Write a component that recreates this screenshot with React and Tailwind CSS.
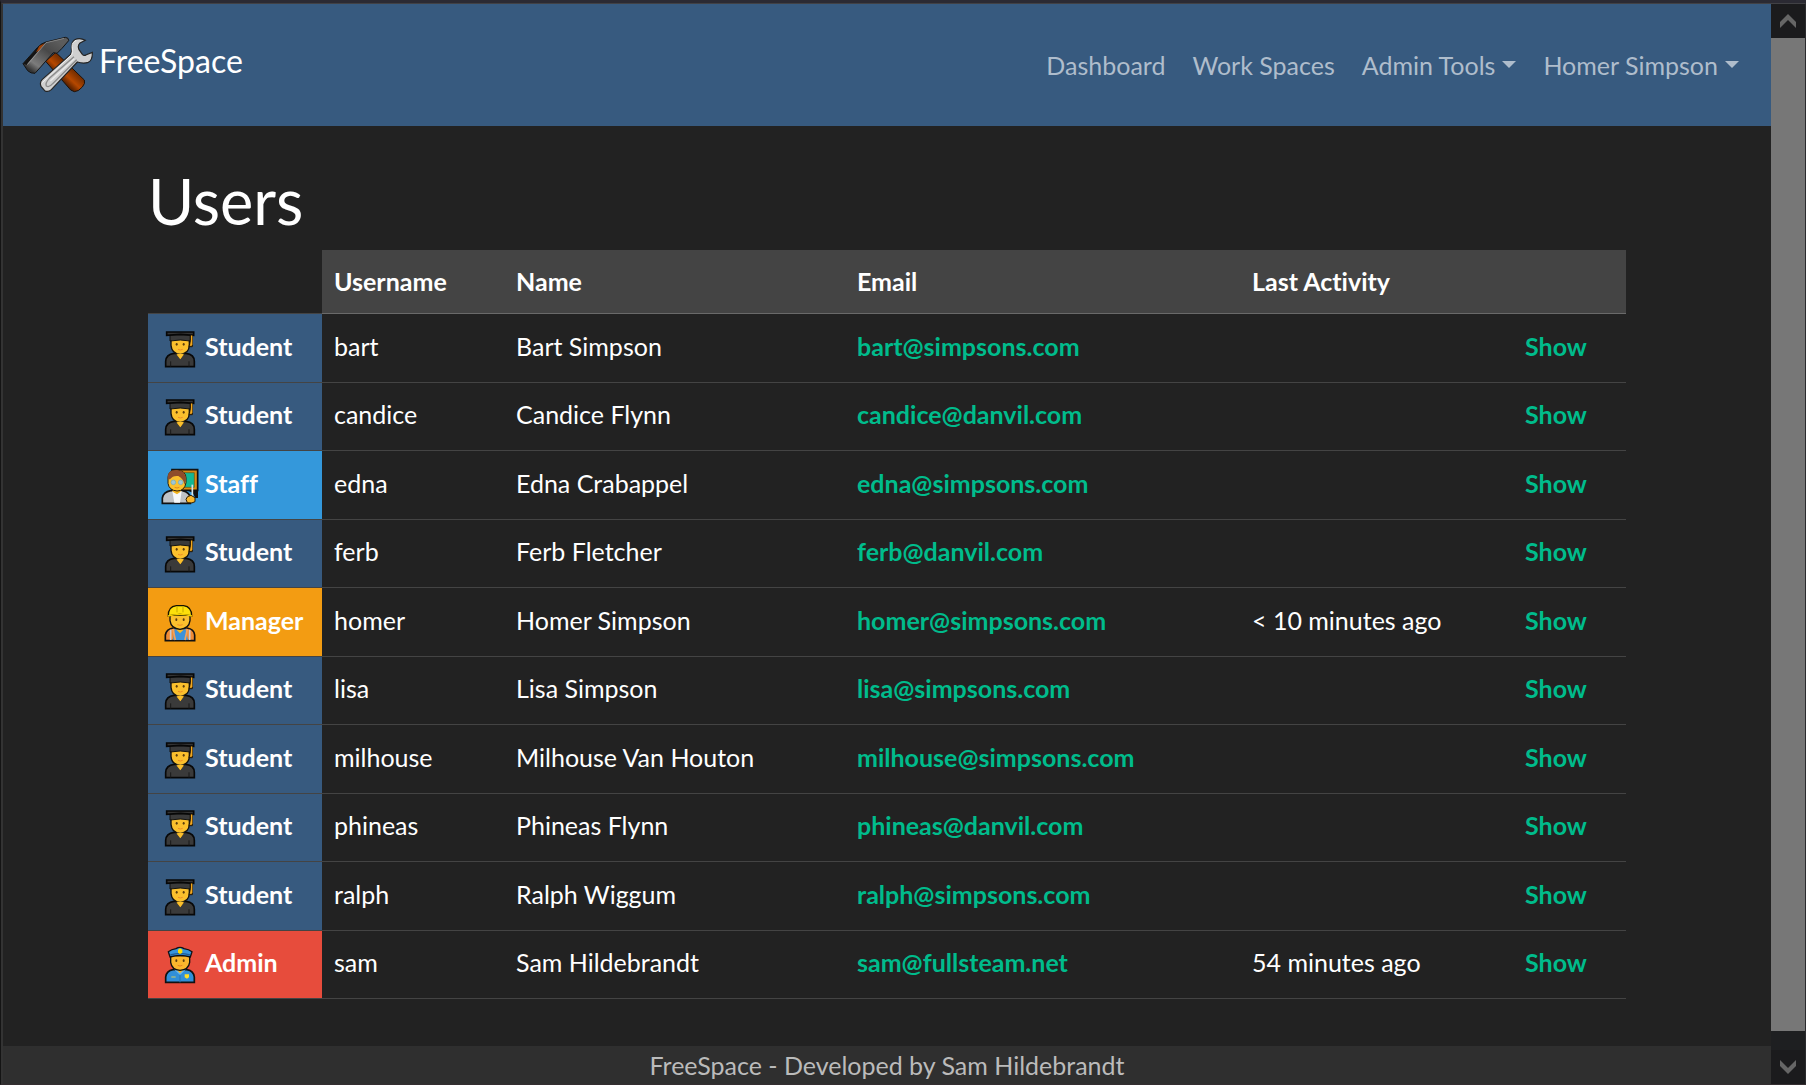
const users = [
  ['student', 'bart', 'Bart Simpson', 'bart@simpsons.com', ''],
  ['student', 'candice', 'Candice Flynn', 'candice@danvil.com', ''],
  ['staff', 'edna', 'Edna Crabappel', 'edna@simpsons.com', ''],
  ['student', 'ferb', 'Ferb Fletcher', 'ferb@danvil.com', ''],
  ['manager', 'homer', 'Homer Simpson', 'homer@simpsons.com', '< 10 minutes ago'],
  ['student', 'lisa', 'Lisa Simpson', 'lisa@simpsons.com', ''],
  ['student', 'milhouse', 'Milhouse Van Houton', 'milhouse@simpsons.com', ''],
  ['student', 'phineas', 'Phineas Flynn', 'phineas@danvil.com', ''],
  ['student', 'ralph', 'Ralph Wiggum', 'ralph@simpsons.com', ''],
  ['admin', 'sam', 'Sam Hildebrandt', 'sam@fullsteam.net', '54 minutes ago'],
];

function StudentIcon() {
  return (
    <svg width="40" height="44" viewBox="60 258 120 132" aria-hidden="true" className="shrink-0">
      <path d="M77 380V364Q78 343 102 340H138Q163 343 163 364V380Z" fill="#3a3a3a" stroke="#080808" strokeWidth="5" />
      <path d="M92 364V380M147 364V380" stroke="#191919" strokeWidth="3" />
      <path d="M110 336H131V344L121 358L110 344Z" fill="#f2b21c" />
      <path d="M93 296H148V316Q147 341 121 343Q95 341 93 316Z" fill="#fbc02d" stroke="#111" strokeWidth="4" />
      <path d="M110 341H131L121 357Z" fill="#fbc02d" />
      <ellipse cx="110" cy="313" rx="3" ry="4" fill="#5d3d0c" />
      <ellipse cx="131" cy="313" rx="3" ry="4" fill="#5d3d0c" />
      <path d="M114 328Q121 332 128 328" fill="none" stroke="#ef8d27" strokeWidth="3" />
      <path d="M90 284H151V303Q121 297 90 303Z" fill="#3a3a3a" stroke="#111" strokeWidth="3" />
      <path d="M80 276H161V286L121 283L80 286Z" fill="#333" stroke="#070707" strokeWidth="5" />
      <path d="M157 285V320H147L151 302V288" fill="#d8941b" stroke="#1a1204" strokeWidth="3" />
      <path d="M155 287V315" stroke="#f2a91f" strokeWidth="4" />
    </svg>
  );
}

function StaffIcon() {
  return (
    <svg width="40" height="44" viewBox="60 69 120 132" aria-hidden="true" className="shrink-0">
      <path d="M96 89H173V151H96Z" fill="#d98a13" stroke="#111" strokeWidth="5" />
      <path d="M101 98H163V142H101Z" fill="#12b894" stroke="#71510d" strokeWidth="2" />
      <path d="M67 190V174Q70 156 92 152H128Q149 157 151 174V190Z" fill="#bfc3c7" stroke="#111" strokeWidth="5" />
      <path d="M97 153H125L120 188H103Z" fill="#f7f9fa" />
      <path d="M98 145H122V155L111 163L98 155Z" fill="#f5b51d" />
      <path d="M84 112Q85 90 110 90Q138 92 138 114V128Q134 153 111 153Q87 151 84 130Z" fill="#fbc02d" stroke="#2b1d05" strokeWidth="3" />
      <path d="M83 118Q80 90 109 90Q139 90 138 121L133 134Q132 118 115 108Q98 106 90 118Z" fill="#8f4d2b" />
      <circle cx="100" cy="127" r="7" fill="#9fc6d4" stroke="#6fa9bd" strokeWidth="2" />
      <circle cx="122" cy="127" r="7" fill="#9fc6d4" stroke="#6fa9bd" strokeWidth="2" />
      <path d="M104 142Q111 146 118 142" fill="none" stroke="#e28a1c" strokeWidth="3" />
      <path d="M144 152H174V174H166L158 158Z" fill="#111" />
      <path d="M157 134V177" stroke="#d8e6e9" strokeWidth="5" />
      <path d="M138 178Q140 168 153 166L165 173V185Q158 191 142 188Z" fill="#fbb92d" stroke="#2b1d05" strokeWidth="3" />
    </svg>
  );
}

function ManagerIcon() {
  return (
    <svg width="40" height="44" viewBox="60 60 120 132" aria-hidden="true" className="shrink-0">
      <path d="M76 182V165Q79 147 99 144H141Q162 147 164 165V182Z" fill="#ef8b35" stroke="#111" strokeWidth="5" />
      <path d="M104 146H136L144 180H99Z" fill="#3b92db" />
      <path d="M92 149V180M149 149V180" stroke="#c9ccd3" strokeWidth="5" />
      <path d="M99 147L106 180M142 147L135 180" stroke="#f2a35c" strokeWidth="5" />
      <path d="M109 140H131V149L120 160L109 149Z" fill="#f7b821" />
      <path d="M90 106H150V122Q147 146 120 148Q93 146 90 122Z" fill="#fbc02d" stroke="#111" strokeWidth="4" />
      <ellipse cx="109" cy="119" rx="3" ry="4" fill="#5d3d0c" />
      <ellipse cx="131" cy="119" rx="3" ry="4" fill="#5d3d0c" />
      <path d="M112 134Q120 138 128 134" fill="none" stroke="#ef8d27" strokeWidth="3" />
      <path d="M85 108Q84 80 109 77H131Q155 80 155 108Q120 99 85 108Z" fill="#fde00b" stroke="#161300" strokeWidth="4" />
      <path d="M111 81V97M129 81V97" stroke="#c4a900" strokeWidth="3" />
      <path d="M84 108Q120 99 156 108" fill="none" stroke="#f5cf00" strokeWidth="5" />
    </svg>
  );
}

function AdminIcon() {
  return (
    <svg width="40" height="44" viewBox="60 69 120 132" aria-hidden="true" className="shrink-0">
      <path d="M77 190V174Q79 156 99 152H141Q161 156 163 174V190Z" fill="#318fd8" stroke="#111" strokeWidth="5" />
      <path d="M104 153L120 169L136 153V148H104Z" fill="#64b5ed" />
      <path d="M120 167V190" stroke="#2674b5" strokeWidth="3" />
      <path d="M110 145H130V152L120 163L110 152Z" fill="#f7b821" />
      <path d="M92 110H149V130Q146 152 120 154Q95 152 92 130Z" fill="#fbb62d" stroke="#111" strokeWidth="4" />
      <ellipse cx="109" cy="125" rx="3" ry="4" fill="#5d3d0c" />
      <ellipse cx="131" cy="125" rx="3" ry="4" fill="#5d3d0c" />
      <path d="M113 139Q120 143 127 139" fill="none" stroke="#e98222" strokeWidth="3" />
      <path d="M85 98Q94 91 108 89Q120 81 132 89Q147 91 156 98L151 114Q120 105 90 114Z" fill="#3795dd" stroke="#111" strokeWidth="4" />
      <path d="M91 108Q120 99 150 108" fill="none" stroke="#215f98" strokeWidth="4" />
      <path d="M114 92L120 88L127 92V101L120 105L114 101Z" fill="#ffe000" />
      <path d="M134 166H147V175L141 179L134 175Z" fill="#ffdf25" />
      <path d="M94 174H107" stroke="#d1cf62" strokeWidth="3" />
    </svg>
  );
}

function Logo() {
  return (
    <svg width="72" height="57" viewBox="66 108 216 171" aria-hidden="true" className="shrink-0">
      <defs>
        <linearGradient id="handle" gradientUnits="userSpaceOnUse" x1="180" y1="240" x2="212" y2="206">
          <stop offset="0" stopColor="#4a1b00" />
          <stop offset="0.5" stopColor="#b64800" />
          <stop offset="1" stopColor="#7a3000" />
        </linearGradient>
        <linearGradient id="head" gradientUnits="userSpaceOnUse" x1="168" y1="120" x2="98" y2="216">
          <stop offset="0" stopColor="#5c5c5c" />
          <stop offset="0.35" stopColor="#484848" />
          <stop offset="0.8" stopColor="#7c7c7c" />
          <stop offset="1" stopColor="#333" />
        </linearGradient>
      </defs>
      <path d="M137 184L167 157L253 240Q257 250 247 261Q235 275 223 275L212 270Z" fill="url(#handle)" stroke="#1d1109" strokeWidth="3" />
      <path d="M69 191L112 143Q123 130 138 126L196 112Q207 113 206 122L186 145L171 160L160 158L105 220Q92 221 83 212Z" fill="url(#head)" stroke="#141414" strokeWidth="3" />
      <path d="M69 191L112 143Q123 130 138 126L83 190L80 195Z" fill="#141414" />
      <path d="M108 157L118 138L134 130L119 151Z" fill="#a04208" />
      <path d="M82 194L138 128L192 115" fill="none" stroke="#a5a5a5" strokeWidth="2" />
      <path d="M215 154Q211 129 224 119Q240 112 256 121L239 130Q232 137 237 149L247 163Q252 169 259 164L277 157Q278 180 265 187Q250 192 232 186L154 269Q144 278 134 272L123 259Q118 246 127 238L211 164Z" fill="#d0d0d0" stroke="#242424" strokeWidth="3.5" />
      <path d="M127 248L216 163Q218 155 216 140Q216 126 229 121" fill="none" stroke="#f2f2f2" strokeWidth="3" />
      <path d="M222 170L148 235Q135 249 139 258Q147 264 158 251L230 179" fill="none" stroke="#8b8b8b" strokeWidth="4" />
      <path d="M223 176L151 243" stroke="#e9e9e9" strokeWidth="4" />
    </svg>
  );
}

const roles = {
  student: { label: 'Student', bg: 'bg-[#375a7f]', Icon: StudentIcon },
  staff: { label: 'Staff', bg: 'bg-[#3498db]', Icon: StaffIcon },
  manager: { label: 'Manager', bg: 'bg-[#f39c12]', Icon: ManagerIcon },
  admin: { label: 'Admin', bg: 'bg-[#e74c3c]', Icon: AdminIcon },
};

function Caret() {
  return (
    <svg width="14" height="7" viewBox="0 0 14 7" aria-hidden="true" className="mb-0.5">
      <path d="M0 0H14L7 7Z" fill="currentColor" />
    </svg>
  );
}

function Navbar() {
  return (
    <header className="flex h-[122px] items-center justify-between bg-[#375a7f] pr-8 pl-[19px]">
      <a href="#home" className="flex items-center gap-[5px] pb-0.5 text-[32px] leading-[48px] text-white">
        <Logo />
        <span className="pb-1.5">FreeSpace</span>
      </a>
      <nav className="flex items-center gap-[27px] leading-[38px] text-[#afbdcc]">
        <a href="#dashboard">Dashboard</a>
        <a href="#workspaces">Work Spaces</a>
        <button type="button" className="flex items-center gap-[7px]">
          Admin Tools
          <Caret />
        </button>
        <button type="button" className="flex items-center gap-[7px]">
          Homer Simpson
          <Caret />
        </button>
      </nav>
    </header>
  );
}

function UsersTable() {
  return (
    <table className="w-full table-fixed border-collapse text-left">
      <colgroup>
        <col className="w-[174px]" />
        <col className="w-[182px]" />
        <col className="w-[341px]" />
        <col className="w-[395px]" />
        <col className="w-[273px]" />
        <col />
      </colgroup>
      <thead>
        <tr className="h-[63px]">
          <td className="border-b border-[#444]" />
          {['Username', 'Name', 'Email', 'Last Activity', ''].map((h) => (
            <th key={h} scope="col" className="border-b border-[#6a6a6a] bg-[#444] px-3 font-bold">
              {h}
            </th>
          ))}
        </tr>
      </thead>
      <tbody>
        {users.map(([role, username, name, email, activity]) => {
          const { label, bg, Icon } = roles[role];
          return (
            <tr key={username} className="border-b border-[#444] odd:h-[69px] even:h-[68px]">
              <th scope="row" className={`${bg} px-3 font-bold`}>
                <span className="flex items-center gap-[5px]">
                  <Icon />
                  <span className="pb-1">{label}</span>
                </span>
              </th>
              <td className="px-3 pb-1">{username}</td>
              <td className="px-3 pb-1">{name}</td>
              <td className="px-3 pb-1">
                <a href={`mailto:${email}`} className="font-bold text-[#00bc8c]">{email}</a>
              </td>
              <td className="px-3 pb-1">{activity}</td>
              <td className="px-3 pb-1">
                <a href={`#${username}`} className="font-bold text-[#00bc8c]">Show</a>
              </td>
            </tr>
          );
        })}
      </tbody>
    </table>
  );
}

function Scrollbar() {
  return (
    <div aria-hidden="true" className="flex w-[34px] shrink-0 flex-col bg-[#1e1f21]">
      <div className="flex h-[34px] items-center justify-center bg-[#1b1b1d]">
        <svg width="16" height="14" viewBox="0 0 16 14">
          <path d="M0 8L8 0L16 8V14L8 6L0 14Z" fill="#666" />
        </svg>
      </div>
      <div className="mb-[19px] grow bg-[#777]" />
      <div className="flex h-[34px] items-center justify-center bg-[#1b1b1d]">
        <svg width="16" height="14" viewBox="0 0 16 14">
          <path d="M0 0L8 8L16 0V6L8 14L0 6Z" fill="#666" />
        </svg>
      </div>
    </div>
  );
}

export default function App() {
  return (
    <div className="flex min-h-screen flex-col border-t-[3px] border-b border-l border-t-[#2b2a33] border-b-[#352e31] border-l-[#141414] bg-[#222] font-['Lato',sans-serif] text-[25px] leading-[38px] text-white [font-variant-ligatures:none]">
      <div className="flex grow border-t border-r border-l-2 border-t-[#414145] border-r-[#2b2b2e] border-l-[#333]">
        <div className="flex min-w-0 grow flex-col">
          <Navbar />
          <main className="mx-auto w-full max-w-[1478px] grow pt-[38px] pb-10">
            <h1 className="mb-3 text-[63px] leading-[74px]">Users</h1>
            <UsersTable />
          </main>
          <footer className="bg-[#2f2f2f] text-center text-[#bbb]">
            FreeSpace - Developed by Sam Hildebrandt
          </footer>
        </div>
        <Scrollbar />
      </div>
    </div>
  );
}
